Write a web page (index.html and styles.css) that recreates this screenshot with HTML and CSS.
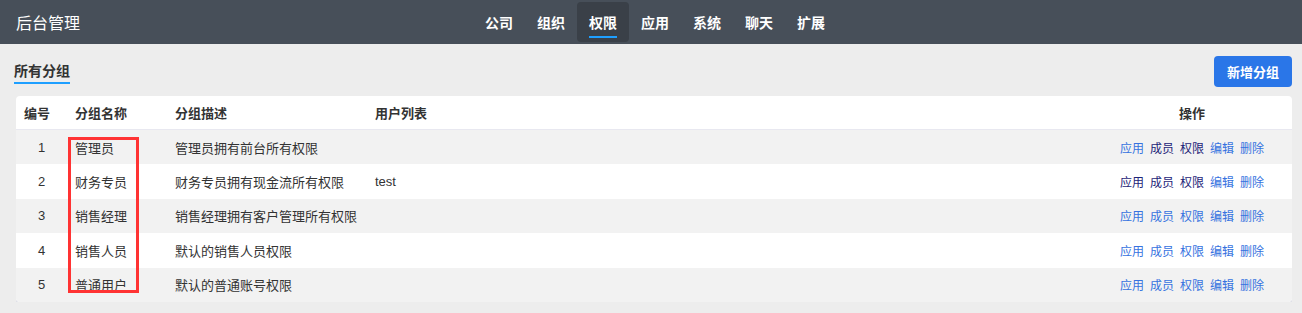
FILE: index.html
```html
<!DOCTYPE html>
<html lang="zh-CN">
<head>
  <meta charset="UTF-8" />
  <meta name="viewport" content="width=device-width, initial-scale=1.0"/>
  <title>后台管理</title>
  <link rel="stylesheet" href="styles.css">
</head>
<body>
  <header class="topbar">
    <div class="brand">后台管理</div>
    <nav class="nav">
      <a class="nav-item">公司</a>
      <a class="nav-item">组织</a>
      <a class="nav-item active">权限</a>
      <a class="nav-item">应用</a>
      <a class="nav-item">系统</a>
      <a class="nav-item">聊天</a>
      <a class="nav-item">扩展</a>
    </nav>
    <div></div>
  </header>

  <main class="page">
    <div class="toolbar">
      <span class="tab">所有分组</span>
      <button type="button" class="btn-add">新增分组</button>
    </div>

    <div class="card">
      <table class="grid">
        <thead>
          <tr>
            <th class="col-id">编号</th>
            <th class="col-name">分组名称</th>
            <th class="col-desc">分组描述</th>
            <th>用户列表</th>
            <th class="col-ops">操作</th>
          </tr>
        </thead>
        <tbody>
          <tr>
            <td class="num">1</td>
            <td>管理员</td>
            <td>管理员拥有前台所有权限</td>
            <td></td>
            <td class="ops"><a>应用</a><a class="seen">成员</a><a class="seen">权限</a><a>编辑</a><a>删除</a></td>
          </tr>
          <tr>
            <td class="num">2</td>
            <td>财务专员</td>
            <td>财务专员拥有现金流所有权限</td>
            <td>test</td>
            <td class="ops"><a class="seen">应用</a><a class="seen">成员</a><a class="seen">权限</a><a>编辑</a><a>删除</a></td>
          </tr>
          <tr>
            <td class="num">3</td>
            <td>销售经理</td>
            <td>销售经理拥有客户管理所有权限</td>
            <td></td>
            <td class="ops"><a>应用</a><a>成员</a><a>权限</a><a>编辑</a><a>删除</a></td>
          </tr>
          <tr>
            <td class="num">4</td>
            <td>销售人员</td>
            <td>默认的销售人员权限</td>
            <td></td>
            <td class="ops"><a>应用</a><a>成员</a><a>权限</a><a>编辑</a><a>删除</a></td>
          </tr>
          <tr>
            <td class="num">5</td>
            <td>普通用户</td>
            <td>默认的普通账号权限</td>
            <td></td>
            <td class="ops"><a>应用</a><a>成员</a><a>权限</a><a>编辑</a><a>删除</a></td>
          </tr>
        </tbody>
      </table>
      <div class="highlight"></div>
    </div>
  </main>
</body>
</html>
```

FILE: styles.css
```css
body {
  margin: 0;
  font-family: "Liberation Sans", "Noto Sans CJK SC", sans-serif;
  background-color: #ededed;
  color: #333;
}

.topbar {
  display: grid;
  grid-template-columns: 1fr auto 1fr;
  align-items: center;
  height: 44px;
  padding: 0 16px;
  background-color: #474f59;
  color: #fff;
}

.brand {
  font-size: 16px;
}

.nav {
  display: flex;
  height: 44px;
  padding-left: 8px;
}

.nav-item {
  position: relative;
  display: flex;
  align-items: center;
  margin: 2px 0;
  padding: 0 12px;
  font-size: 14px;
  font-weight: bold;
  border-radius: 4px;
  cursor: pointer;
}

.nav-item.active {
  background-color: #3a4048;
}

.nav-item.active::after {
  content: "";
  position: absolute;
  left: 12px;
  right: 12px;
  bottom: 4px;
  height: 2px;
  background-color: #1e9fff;
}

.page {
  padding: 12px 10px 0 16px;
}

.toolbar {
  display: flex;
  justify-content: space-between;
  align-items: flex-start;
  height: 40px;
}

.tab {
  margin: 7px 0 0 -2px;
  padding-bottom: 2px;
  font-size: 14px;
  font-weight: bold;
  line-height: 17px;
  border-bottom: 2px solid #1e9fff;
}

.btn-add {
  height: 31px;
  padding: 0 13px;
  font-family: inherit;
  font-size: 13px;
  font-weight: bold;
  color: #fff;
  background-color: #2a76e8;
  border: none;
  border-radius: 4px;
  cursor: pointer;
}

.card {
  position: relative;
  background-color: #fff;
  border-radius: 4px;
  overflow: hidden;
  box-shadow: 0 2px 0 #dcdde6;
}

.grid {
  width: 100%;
  border-collapse: collapse;
  font-size: 13px;
}

.grid th,
.grid td {
  height: 34.4px;
  padding: 0 8px;
  text-align: left;
}

.grid th {
  height: 33px;
  font-weight: bold;
  border-bottom: 1px solid #e8e8f0;
}

.grid tbody tr:nth-child(odd) {
  background-color: #f2f2f2;
}

.col-id {
  width: 35px;
}

.col-name {
  width: 84px;
}

.col-desc {
  width: 184px;
}

.col-ops {
  width: 184px;
}

.grid th.col-ops,
.grid td.ops {
  text-align: center;
}

.grid td.num {
  text-align: center;
}

.ops {
  font-size: 12px;
}

.ops a {
  margin: 0 3px;
  color: #3672e0;
  cursor: pointer;
}

.ops a.seen {
  color: #1d2478;
}

.highlight {
  position: absolute;
  left: 52px;
  top: 41px;
  width: 65px;
  height: 150px;
  border: 3px solid #f33;
}
```
